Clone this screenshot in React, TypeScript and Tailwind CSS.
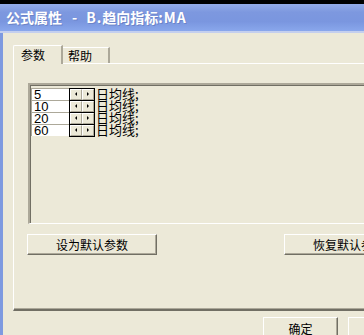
import React from 'react';

const font = { fontFamily: '"Noto Sans CJK SC", "Liberation Sans", sans-serif' };

// Small XP-style spin arrow button
const SpinHalf = ({ dir }: { dir: 'left' | 'right' }) => (
    <div className="w-[12px] h-[11px] bg-[#ECE9D8] border-t border-l border-white border-r border-b border-r-[#ACA899] border-b-[#ACA899] flex items-center justify-center">
        {dir === 'left' ? (
            <div className="w-0 h-0 border-y-[2px] border-y-transparent border-r-[2px] border-r-black" />
        ) : (
            <div className="w-0 h-0 border-y-[2px] border-y-transparent border-l-[2px] border-l-black" />
        )}
    </div>
);

const ParamRow = ({ value }: { value: string }) => (
    <div className="flex items-center h-[12px]">
        <div className="w-[38px] h-[12px] bg-white border-t border-l border-[#ACA899] text-[13px] leading-[11px] pl-[2px] text-black" style={{ fontFamily: '"Liberation Sans", sans-serif' }}>
            {value}
        </div>
        <div className="flex border border-black h-[13px]">
            <SpinHalf dir="left" />
            <SpinHalf dir="right" />
        </div>
        <span className="ml-[1px] text-[13px] leading-[12px] text-black whitespace-nowrap">日均线;</span>
    </div>
);

const Btn = ({ label, className }: { label: string; className?: string }) => (
    <div className={`h-[21px] bg-[#ECE9D8] border-t border-l border-white border-r border-b border-r-[#716F64] border-b-[#716F64] shadow-[inset_-1px_-1px_0_#ACA899] flex items-center justify-center text-[12px] text-black whitespace-nowrap ${className ?? ''}`}>
        {label}
    </div>
);

export default function App() {
    return (
        <div className="w-[364px] h-[335px] overflow-hidden bg-black" style={font}>
            <div className="w-[440px]">
                <div className="h-[4px] bg-black" />
                {/* title bar */}
                <div className="h-[27px] bg-[linear-gradient(180deg,#93ACE8_0%,#7D98DF_30%,#7A96DF_65%,#89A7EC_100%)] flex items-center pl-[6px] text-white text-[14px] font-bold whitespace-nowrap [text-shadow:1px_1px_0_#6C84C8]">
                    <span>公式属性</span>
                    <span className="ml-[10px]">-</span>
                    <span className="ml-[9px] tracking-[1px]">B.</span>
                    <span>趋向指标</span>
                    <span className="tracking-[1px]">:MA</span>
                </div>
                <div className="h-[2px] bg-[#C4CFEE]" />
                {/* body */}
                <div className="flex h-[310px]">
                    <div className="w-[3px] bg-[#7E9AE0]" />
                    <div className="flex-1 bg-[#ECE9D8] flex flex-col pl-[10px] pt-[11px]">
                        {/* tabs */}
                        <div className="flex items-end h-[19px] w-[416px]">
                            <div className="h-[19px] w-[50px] bg-[#ECE9D8] border-t border-l border-white border-r-2 border-r-[#ACA899] rounded-tl-[2px] text-[12px] text-black pl-[7px] pt-[1px] leading-[16px] relative z-10 -mb-px">
                                参数
                            </div>
                            <div className="h-[16px] w-[47px] bg-[#ECE9D8] border-t border-white border-r-2 border-r-[#ACA899] text-[12px] text-black pl-[5px] leading-[15px]">
                                帮助
                            </div>
                        </div>
                        {/* tab panel */}
                        <div className="w-[416px] h-[248px] border-t border-l border-white border-b-2 border-r-2 border-b-[#716F64] border-r-[#716F64] shadow-[inset_0_-1px_0_#ACA899] flex flex-col px-[13px] pt-[19px]">
                            <div className="ml-[1px] mr-[1px] h-[141px] border-t-2 border-l-2 border-t-[#ACA899] border-l-[#ACA899] border-b border-r border-white shadow-[inset_1px_1px_0_#716F64] pl-[1px] pt-[3px] flex flex-col">
                                <ParamRow value="5" />
                                <ParamRow value="10" />
                                <ParamRow value="20" />
                                <ParamRow value="60" />
                            </div>
                            <div className="flex justify-between mt-[10px]">
                                <Btn label="设为默认参数" className="w-[130px]" />
                                <Btn label="恢复默认参数" className="w-[130px]" />
                            </div>
                        </div>
                        {/* bottom buttons */}
                        <div className="flex gap-[10px] pl-[250px] pt-[6px]">
                            <Btn label="确定" className="w-[75px] h-[23px]" />
                            <Btn label="取消" className="w-[75px] h-[23px]" />
                        </div>
                    </div>
                </div>
            </div>
        </div>
    );
}
